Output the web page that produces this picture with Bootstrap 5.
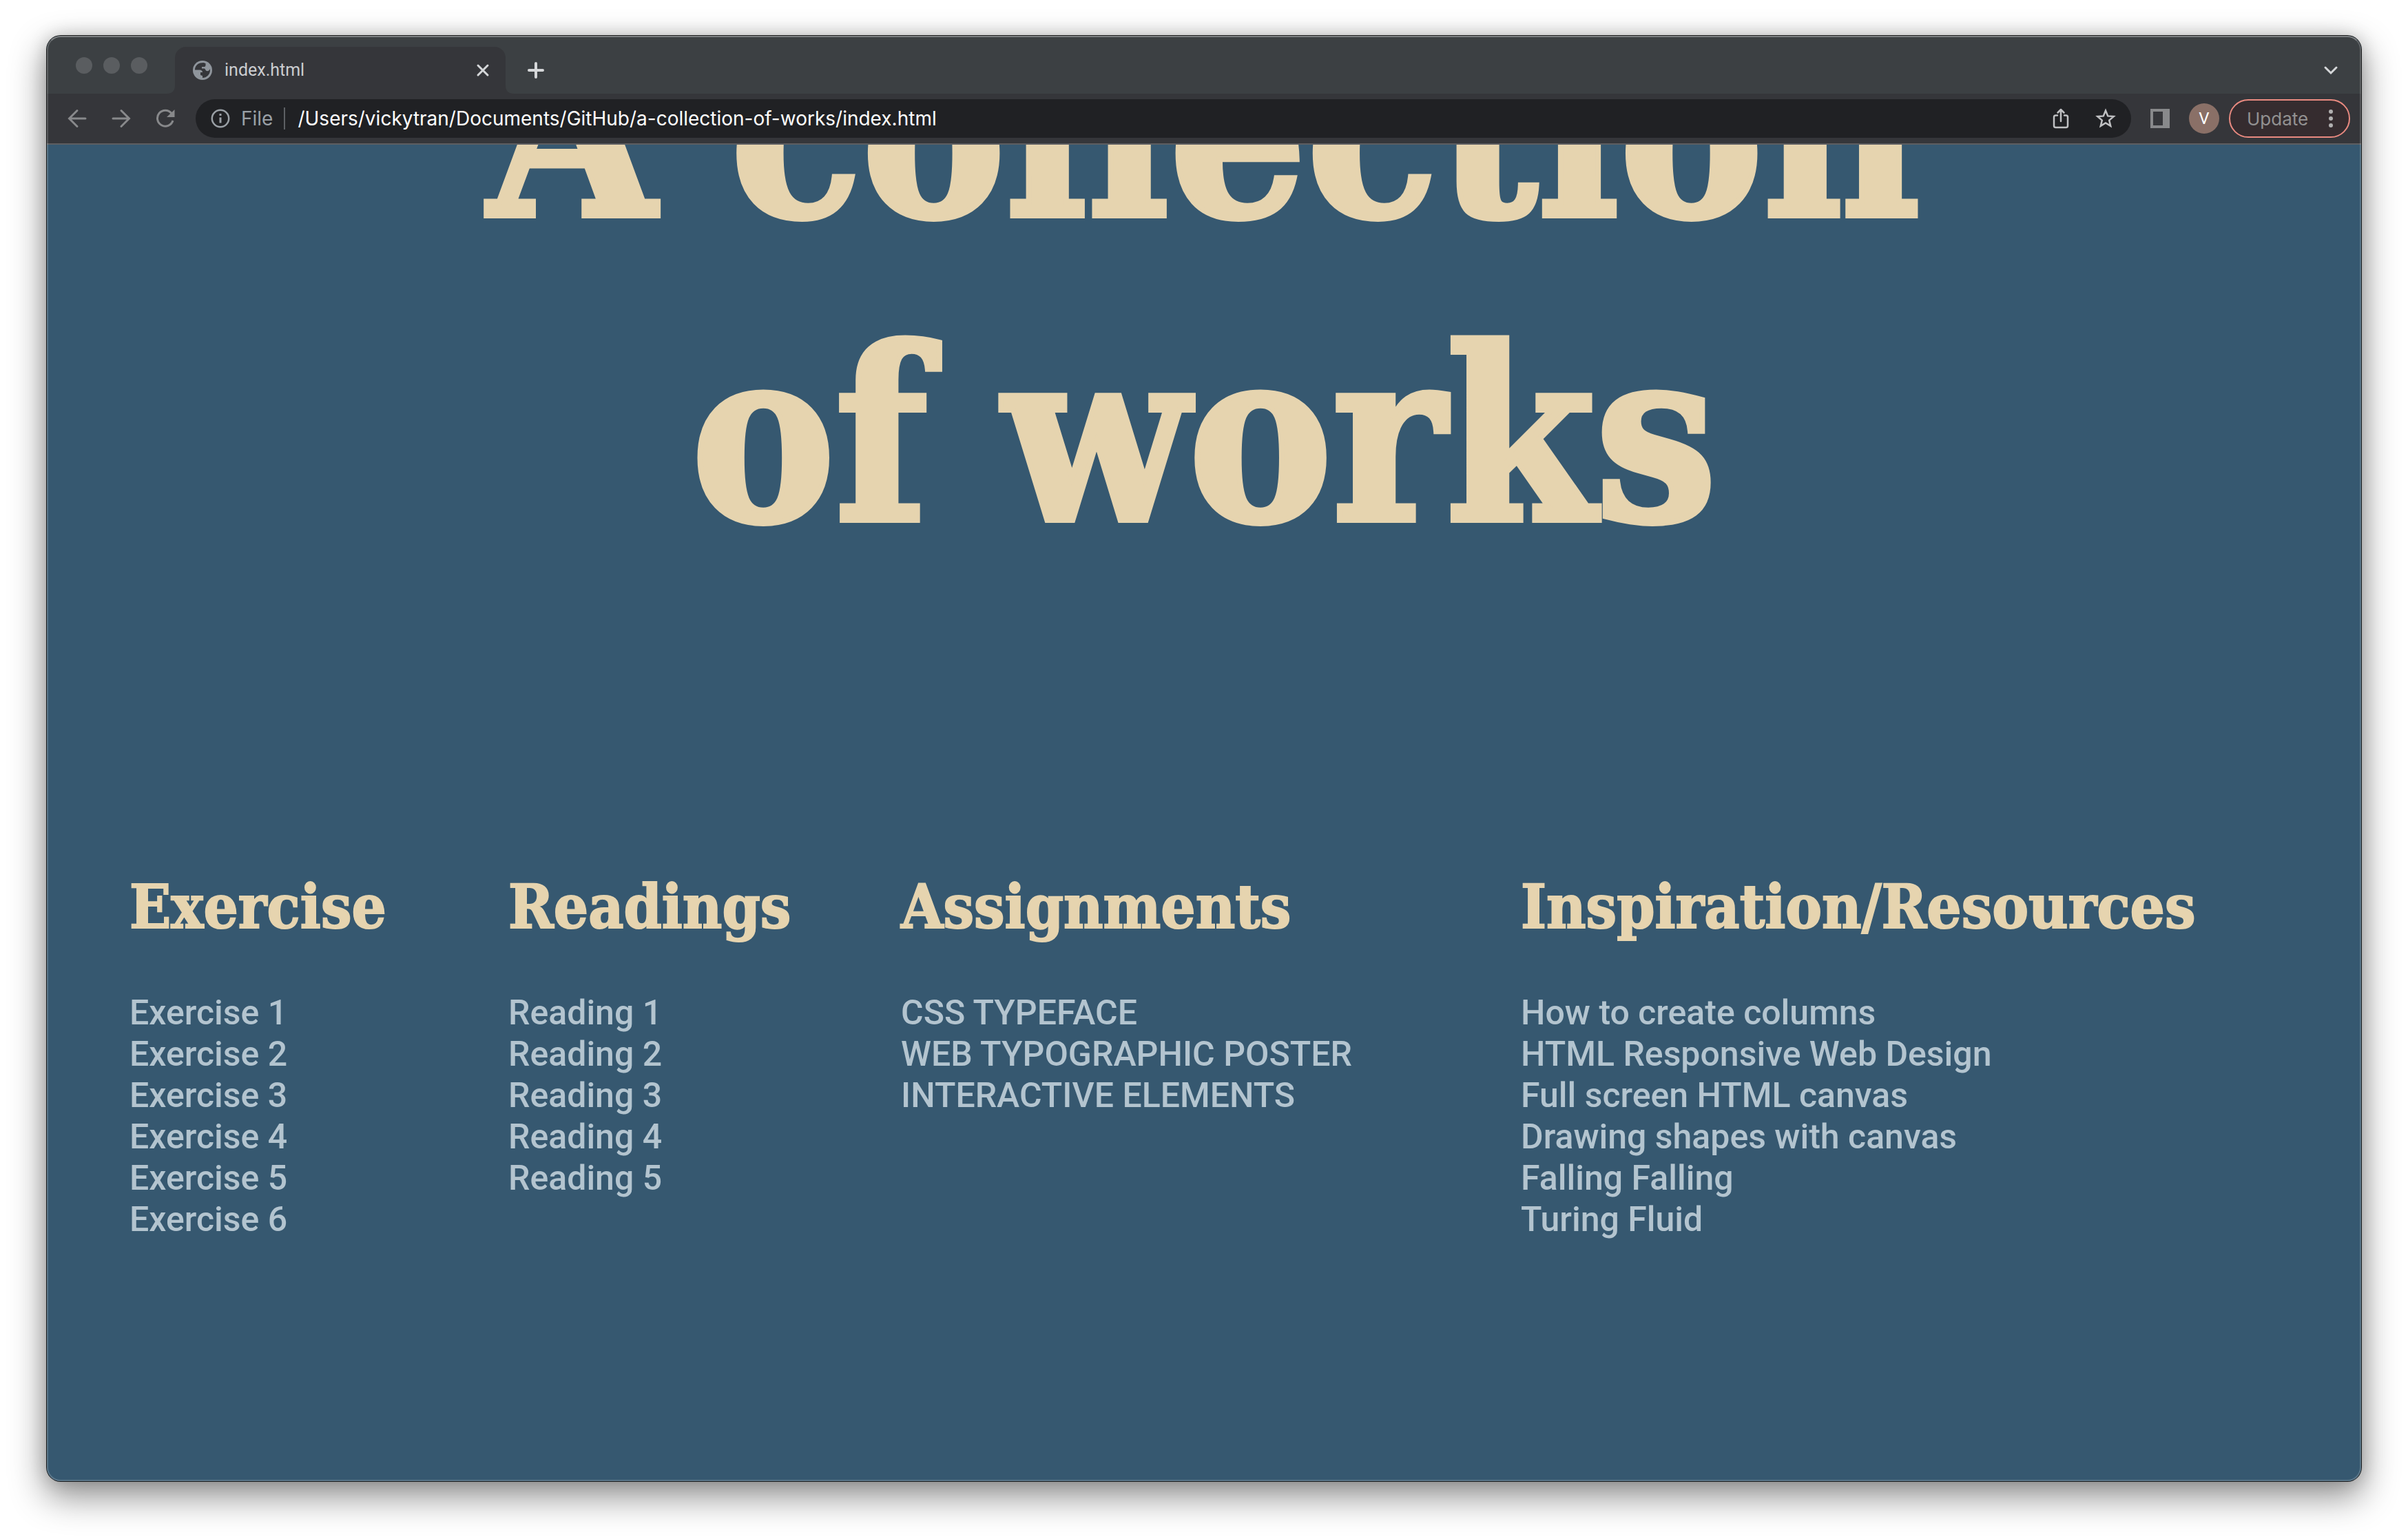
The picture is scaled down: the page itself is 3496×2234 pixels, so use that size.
<!DOCTYPE html>
<html lang="en">
<head>
<meta charset="utf-8">
<meta name="viewport" content="width=device-width, initial-scale=1">
<title>index.html</title>
<link href="https://cdn.jsdelivr.net/npm/bootstrap@5.3.0/dist/css/bootstrap.min.css" rel="stylesheet">
<style>
  body { background: #fff; font-family: Roboto, "Liberation Sans", sans-serif; padding: 52px 68px 84px; }
  svg { display: block; flex: none; }
  .browser { border-radius: 20px; background: #365870; box-shadow: 0 0 0 1px #1a1b1c, 0 20px 50px 4px rgba(0,0,0,.42), 0 0 26px rgba(0,0,0,.18); }
  .browser-edge { inset: 0; border-radius: 20px; border: 2px solid rgba(255,255,255,.18); border-top-color: rgba(255,255,255,.34); pointer-events: none; z-index: 3; }
  .tab-strip { height: 84px; padding: 16px 32px 0 42px; background: #3c4043; border-radius: 20px 20px 0 0; }
  .traffic { width: 24px; height: 24px; border-radius: 50%; background: #5a5d60; }
  .traffic-set { gap: 16px; padding: 0 28px 14px 0; }
  .page-tab { width: 504px; }
  .page-tab-foot { width: 12px; height: 12px; }
  .page-tab-body { width: 480px; height: 68px; padding: 0 22px 0 26px; gap: 18px; background: #35363a; border-radius: 16px 16px 0 0; color: #cbcdd0; font-size: 25px; }
  .bare-btn { border: 0; background: none; padding: 0; color: inherit; }
  .tool-row { height: 74px; padding: 0 16px 0 30px; background: #35363a; border-bottom: 2px solid #5d5e61; color: #88898b; }
  .nav-set { gap: 36px; margin-right: 30px; }
  .omnibox { height: 56px; padding: 0 22px; border-radius: 28px; background: #202124; color: #9aa0a6; font: 28px Inter, sans-serif; }
  .omnibox-rule { width: 2px; height: 32px; margin: 0 18px 0 16px; background: #5d6064; }
  .omnibox input { border: 0; padding: 0; background: none; color: #fff; outline: 0; min-width: 0; }
  .omnibox-tools { gap: 36px; color: #c0c1c3; }
  .avatar { width: 44px; height: 44px; border-radius: 50%; background: #8a7067; color: #fff; font-size: 24px; line-height: 44px; margin: 0 14px 0 28px; }
  .update-btn { height: 56px; width: 176px; border: 2px solid #e98a80; border-radius: 28px; background: #352c2f; color: #929191; font: 26px Inter, sans-serif; padding: 0 22px 0 24px; }
  .works { padding: 0 120px; background: #365870; border-radius: 0 0 20px 20px; }
  .slab { font-family: "DejaVu Serif Condensed", "DejaVu Serif", serif; font-stretch: condensed; font-weight: 700; color: #e6d4af; -webkit-text-stroke: 2px #e6d4af; }
  .works h1 { font-size: 348px; line-height: 442px; margin: -240px 0 410px; -webkit-text-stroke-width: 8px; }
  .works h2 { font-size: 88px; line-height: 104px; margin: 0 0 72px; white-space: nowrap; }
  .works-grid { display: grid; grid-template-columns: 55fr 57fr 90fr 110fr; }
  .works-grid a { color: #b3c4cf; font: 500 50px/60px Roboto, sans-serif; text-decoration: none; white-space: nowrap; }
  .works-grid li { line-height: 60px; height: 60px; }
</style>
<script src="https://cdn.jsdelivr.net/npm/bootstrap@5.3.0/dist/js/bootstrap.bundle.min.js"></script>
</head>
<body class="d-flex flex-column min-vh-100">
<div class="browser position-relative d-flex flex-column flex-grow-1 overflow-visible">
  <div class="browser-edge position-absolute"></div>
  <header>
    <div class="tab-strip d-flex align-items-center">
      <div class="traffic-set d-flex">
        <span class="traffic"></span><span class="traffic"></span><span class="traffic"></span>
      </div>
      <div class="page-tab d-flex align-items-end">
        <svg class="page-tab-foot" viewBox="0 0 12 12"><path d="M12 0v12H0Q12 12 12 0" fill="#35363a"/></svg>
        <div class="page-tab-body d-flex align-items-center">
          <svg width="28" height="28" viewBox="0 0 28 28"><circle cx="14" cy="14" r="14" fill="#8f959c"/><path d="M10.500 3.500C5.500 5 3 9 3 13.500h7c2.500 0 4 1.500 4 3.500h-3v4l3 1v3c6 0 11-5 11-11v-2c-1 2.500-3 3.500-5 3-1.500-.5-1.500-2-3-3.500h-4V9h3.500c1.500 0 2-1 2-2.500V4l-3-1z" fill="#35363a"/></svg>
          <span class="flex-grow-1">index.html</span>
          <button class="bare-btn" aria-label="Close tab"><svg width="22" height="22" viewBox="0 0 22 22" stroke="#d5d7d9" stroke-width="3" stroke-linecap="round"><path d="M4 4l14 14M18 4L4 18"/></svg></button>
        </div>
        <svg class="page-tab-foot" viewBox="0 0 12 12"><path d="M0 0v12h12Q0 12 0 0" fill="#35363a"/></svg>
      </div>
      <button class="bare-btn ms-3 ps-1" aria-label="New tab"><svg width="24" height="24" viewBox="0 0 24 24" stroke="#d5d7d9" stroke-width="4" stroke-linecap="round"><path d="M12 2v20M2 12h20"/></svg></button>
      <button class="bare-btn ms-auto" aria-label="Search tabs"><svg width="24" height="24" viewBox="0 0 24 24" fill="none" stroke="#d5d7d9" stroke-width="3" stroke-linecap="round"><path d="M4 8l8 8 8-8"/></svg></button>
    </div>
    <div class="tool-row d-flex align-items-center">
      <div class="nav-set d-flex">
        <button class="bare-btn" aria-label="Back"><svg width="28" height="28" viewBox="0 0 28 28" fill="none" stroke="currentColor" stroke-width="3" stroke-linecap="round"><path d="M26 14H3M14 2.500L2.500 14 14 25.500"/></svg></button>
        <button class="bare-btn" aria-label="Forward"><svg width="28" height="28" viewBox="0 0 28 28" fill="none" stroke="currentColor" stroke-width="3" stroke-linecap="round"><path d="M2 14h23M14 2.500L25.500 14 14 25.500"/></svg></button>
        <button class="bare-btn" aria-label="Reload"><svg width="28" height="28" viewBox="0 0 28 28"><path d="M23 6.500A11.500 11.500 0 1 0 25 17" fill="none" stroke="currentColor" stroke-width="3"/><path d="M27.500 1v11H16z" fill="currentColor"/></svg></button>
      </div>
      <div class="omnibox d-flex align-items-center flex-grow-1">
        <svg width="28" height="28" viewBox="0 0 28 28" fill="none" stroke="currentColor" stroke-width="2.500"><circle cx="14" cy="14" r="12.200"/><path d="M14 12.500v8" stroke-width="3"/><path d="M14 7v3" stroke-width="3"/></svg>
        <label class="ps-3" for="address">File</label>
        <span class="omnibox-rule"></span>
        <input id="address" class="flex-grow-1" type="text" value="/Users/vickytran/Documents/GitHub/a-collection-of-works/index.html">
        <div class="omnibox-tools d-flex">
          <button class="bare-btn" aria-label="Share"><svg width="28" height="30" viewBox="0 0 28 30" fill="none" stroke="currentColor" stroke-width="2.500" stroke-linecap="round" stroke-linejoin="round"><path d="M9 10.500H6.500a2.500 2.500 0 0 0-2.500 2.500v12.500a2.500 2.500 0 0 0 2.500 2.500h15a2.500 2.500 0 0 0 2.500-2.500V13a2.500 2.500 0 0 0-2.500-2.500H19M14 19V3M9.500 6.500L14 2l4.500 4.500"/></svg></button>
          <button class="bare-btn" aria-label="Bookmark"><svg width="30" height="30" viewBox="0 0 30 30" fill="none" stroke="currentColor" stroke-width="2.500"><path d="M15 3.500l3.200 7.900 8.500.7-6.500 5.500 2 8.300-7.200-4.500-7.200 4.500 2-8.300-6.500-5.500 8.500-.7z"/></svg></button>
        </div>
      </div>
      <button class="bare-btn ms-4 ps-1" aria-label="Side panel"><svg width="28" height="28" viewBox="0 0 28 28"><path fill="currentColor" fill-rule="evenodd" d="M0 0h28v28H0zM4 4v20h14V4z"/></svg></button>
      <button class="bare-btn avatar">V</button>
      <button class="update-btn d-flex align-items-center justify-content-between">Update
        <svg width="8" height="28" viewBox="0 0 8 28" fill="#b1b0b0"><circle cx="4" cy="4" r="3"/><circle cx="4" cy="14" r="3"/><circle cx="4" cy="24" r="3"/></svg></button>
    </div>
  </header>
  <main class="works flex-grow-1 overflow-hidden">
    <h1 class="slab text-center">A collection<br>of works</h1>
    <div class="works-grid">
      <section><h2 class="slab">Exercise</h2>
        <ul class="list-unstyled m-0">
          <li><a href="#">Exercise 1</a></li><li><a href="#">Exercise 2</a></li><li><a href="#">Exercise 3</a></li>
          <li><a href="#">Exercise 4</a></li><li><a href="#">Exercise 5</a></li><li><a href="#">Exercise 6</a></li>
        </ul></section>
      <section><h2 class="slab">Readings</h2>
        <ul class="list-unstyled m-0">
          <li><a href="#">Reading 1</a></li><li><a href="#">Reading 2</a></li><li><a href="#">Reading 3</a></li>
          <li><a href="#">Reading 4</a></li><li><a href="#">Reading 5</a></li>
        </ul></section>
      <section><h2 class="slab">Assignments</h2>
        <ul class="list-unstyled m-0">
          <li><a href="#">CSS TYPEFACE</a></li><li><a href="#">WEB TYPOGRAPHIC POSTER</a></li><li><a href="#">INTERACTIVE ELEMENTS</a></li>
        </ul></section>
      <section><h2 class="slab">Inspiration/Resources</h2>
        <ul class="list-unstyled m-0">
          <li><a href="#">How to create columns</a></li><li><a href="#">HTML Responsive Web Design</a></li><li><a href="#">Full screen HTML canvas</a></li>
          <li><a href="#">Drawing shapes with canvas</a></li><li><a href="#">Falling Falling</a></li><li><a href="#">Turing Fluid</a></li>
        </ul></section>
    </div>
  </main>
</div>
</body>
</html>
